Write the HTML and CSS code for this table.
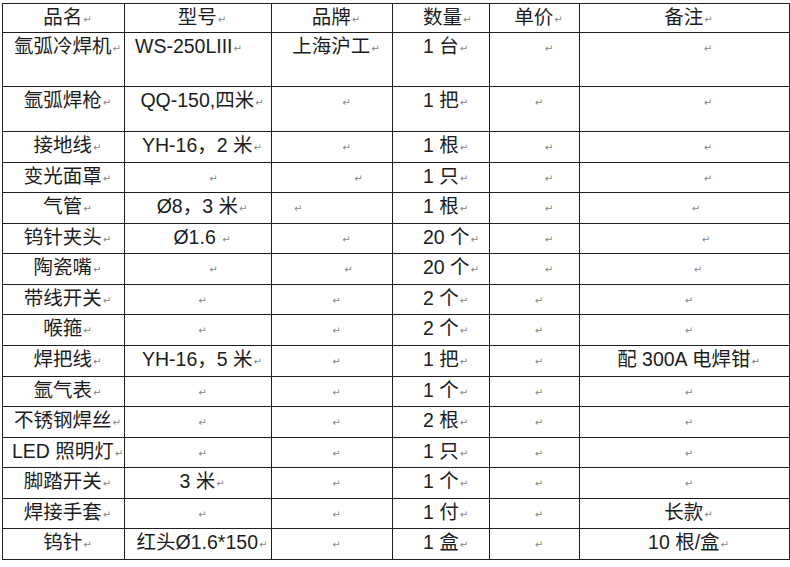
FILE: index.html
```html
<!DOCTYPE html>
<html lang="zh-CN">
<head>
<meta charset="utf-8">
<title>设备清单</title>
<link rel="stylesheet" href="styles.css">
</head>
<body>
<table class="sheet">
  <colgroup>
    <col class="c1"><col class="c2"><col class="c3"><col class="c4"><col class="c5"><col class="c6">
  </colgroup>
  <tr class="hd">
    <td>品名<span class="pm">↵</span></td>
    <td>型号<span class="pm">↵</span></td>
    <td>品牌<span class="pm">↵</span></td>
    <td class="qty">数量<span class="pm">↵</span></td>
    <td>单价<span class="pm">↵</span></td>
    <td>备注<span class="pm">↵</span></td>
  </tr>
  <tr class="tall1">
    <td>氩弧冷焊机<span class="pm">↵</span></td>
    <td class="left">WS-250LIII<span class="pm">↵</span></td>
    <td>上海沪工<span class="pm">↵</span></td>
    <td class="qty">1 台<span class="pm">↵</span></td>
    <td class="p28"><span class="pm">↵</span></td>
    <td class="p46"><span class="pm">↵</span></td>
  </tr>
  <tr class="tall2">
    <td>氩弧焊枪<span class="pm">↵</span></td>
    <td>QQ-150,四米<span class="pm">↵</span></td>
    <td class="p28"><span class="pm">↵</span></td>
    <td class="qty">1 把<span class="pm">↵</span></td>
    <td><span class="pm">↵</span></td>
    <td class="p46"><span class="pm">↵</span></td>
  </tr>
  <tr>
    <td>接地线<span class="pm">↵</span></td>
    <td>YH-16，2 米<span class="pm">↵</span></td>
    <td class="p28"><span class="pm">↵</span></td>
    <td class="qty">1 根<span class="pm">↵</span></td>
    <td class="p28"><span class="pm">↵</span></td>
    <td class="p46"><span class="pm">↵</span></td>
  </tr>
  <tr>
    <td>变光面罩<span class="pm">↵</span></td>
    <td class="p30"><span class="pm">↵</span></td>
    <td class="p52"><span class="pm">↵</span></td>
    <td class="qty">1 只<span class="pm">↵</span></td>
    <td class="p28"><span class="pm">↵</span></td>
    <td class="p46"><span class="pm">↵</span></td>
  </tr>
  <tr>
    <td>气管<span class="pm">↵</span></td>
    <td>Ø8，3 米<span class="pm">↵</span></td>
    <td class="lmark"><span class="pm">↵</span></td>
    <td class="qty">1 根<span class="pm">↵</span></td>
    <td class="p28"><span class="pm">↵</span></td>
    <td class="p22"><span class="pm">↵</span></td>
  </tr>
  <tr>
    <td>钨针夹头<span class="pm">↵</span></td>
    <td>Ø1.6 <span class="pm">↵</span></td>
    <td class="p28"><span class="pm">↵</span></td>
    <td class="qty">20 个<span class="pm">↵</span></td>
    <td class="p28"><span class="pm">↵</span></td>
    <td class="p42"><span class="pm">↵</span></td>
  </tr>
  <tr>
    <td>陶瓷嘴<span class="pm">↵</span></td>
    <td class="p30"><span class="pm">↵</span></td>
    <td class="p32"><span class="pm">↵</span></td>
    <td class="qty">20 个<span class="pm">↵</span></td>
    <td class="p28"><span class="pm">↵</span></td>
    <td class="p26"><span class="pm">↵</span></td>
  </tr>
  <tr>
    <td>带线开关<span class="pm">↵</span></td>
    <td><span class="pm">↵</span></td>
    <td><span class="pm">↵</span></td>
    <td class="qty">2 个<span class="pm">↵</span></td>
    <td><span class="pm">↵</span></td>
    <td><span class="pm">↵</span></td>
  </tr>
  <tr>
    <td>喉箍<span class="pm">↵</span></td>
    <td><span class="pm">↵</span></td>
    <td><span class="pm">↵</span></td>
    <td class="qty">2 个<span class="pm">↵</span></td>
    <td><span class="pm">↵</span></td>
    <td><span class="pm">↵</span></td>
  </tr>
  <tr>
    <td>焊把线<span class="pm">↵</span></td>
    <td>YH-16，5 米<span class="pm">↵</span></td>
    <td><span class="pm">↵</span></td>
    <td class="qty">1 把<span class="pm">↵</span></td>
    <td><span class="pm">↵</span></td>
    <td>配 300A 电焊钳<span class="pm">↵</span></td>
  </tr>
  <tr>
    <td>氩气表<span class="pm">↵</span></td>
    <td><span class="pm">↵</span></td>
    <td><span class="pm">↵</span></td>
    <td class="qty">1 个<span class="pm">↵</span></td>
    <td><span class="pm">↵</span></td>
    <td><span class="pm">↵</span></td>
  </tr>
  <tr>
    <td>不锈钢焊丝<span class="pm">↵</span></td>
    <td><span class="pm">↵</span></td>
    <td><span class="pm">↵</span></td>
    <td class="qty">2 根<span class="pm">↵</span></td>
    <td><span class="pm">↵</span></td>
    <td><span class="pm">↵</span></td>
  </tr>
  <tr>
    <td>LED 照明灯<span class="pm">↵</span></td>
    <td><span class="pm">↵</span></td>
    <td><span class="pm">↵</span></td>
    <td class="qty">1 只<span class="pm">↵</span></td>
    <td><span class="pm">↵</span></td>
    <td><span class="pm">↵</span></td>
  </tr>
  <tr>
    <td>脚踏开关<span class="pm">↵</span></td>
    <td>3 米<span class="pm">↵</span></td>
    <td><span class="pm">↵</span></td>
    <td class="qty">1 个<span class="pm">↵</span></td>
    <td><span class="pm">↵</span></td>
    <td><span class="pm">↵</span></td>
  </tr>
  <tr>
    <td>焊接手套<span class="pm">↵</span></td>
    <td><span class="pm">↵</span></td>
    <td><span class="pm">↵</span></td>
    <td class="qty">1 付<span class="pm">↵</span></td>
    <td><span class="pm">↵</span></td>
    <td>长款<span class="pm">↵</span></td>
  </tr>
  <tr>
    <td>钨针<span class="pm">↵</span></td>
    <td>红头Ø1.6*150<span class="pm">↵</span></td>
    <td><span class="pm">↵</span></td>
    <td class="qty">1 盒<span class="pm">↵</span></td>
    <td><span class="pm">↵</span></td>
    <td>10 根/盒<span class="pm">↵</span></td>
  </tr>
</table>
</body>
</html>
```
FILE: styles.css
```css
html, body {
  margin: 0;
  padding: 0;
  background: #ffffff;
}
body {
  padding: 3px 0 0 2px;
}
.sheet {
  border-collapse: collapse;
  table-layout: fixed;
  width: 787px;
  font-family: "Liberation Sans", "Noto Sans CJK SC", sans-serif;
  font-size: 19.5px;
  color: #1c1c1c;
}
.c1 { width: 122px; }
.c2 { width: 147px; }
.c3 { width: 121px; }
.c4 { width: 97px; }
.c5 { width: 90px; }
.c6 { width: 210px; }
.sheet td {
  border: 1px solid #1f1f1f;
  padding: 3px 0 0 8px;
  height: 26.57px;
  line-height: 20px;
  text-align: center;
  vertical-align: top;
  white-space: nowrap;
  overflow: hidden;
}
.sheet tr.hd td { height: 25px; }
.sheet tr.tall1 td { height: 50px; }
.sheet tr.tall2 td { height: 41px; }
.sheet td.qty {
  text-align: left;
  padding-left: 30px;
}
.sheet td.left {
  text-align: left;
  padding-left: 10px;
}
.sheet td.lmark {
  text-align: left;
  padding-left: 21px;
}
.sheet td.p22 { padding-left: 22px; }
.sheet td.p26 { padding-left: 26px; }
.sheet td.p28 { padding-left: 28px; }
.sheet td.p30 { padding-left: 30px; }
.sheet td.p32 { padding-left: 32px; }
.sheet td.p42 { padding-left: 42px; }
.sheet td.p46 { padding-left: 46px; }
.sheet td.p52 { padding-left: 52px; }
.pm {
  font-family: "DejaVu Sans", sans-serif;
  font-size: 10px;
  line-height: 10px;
  color: #858585;
  margin-left: 1px;
  vertical-align: 1px;
}
```
